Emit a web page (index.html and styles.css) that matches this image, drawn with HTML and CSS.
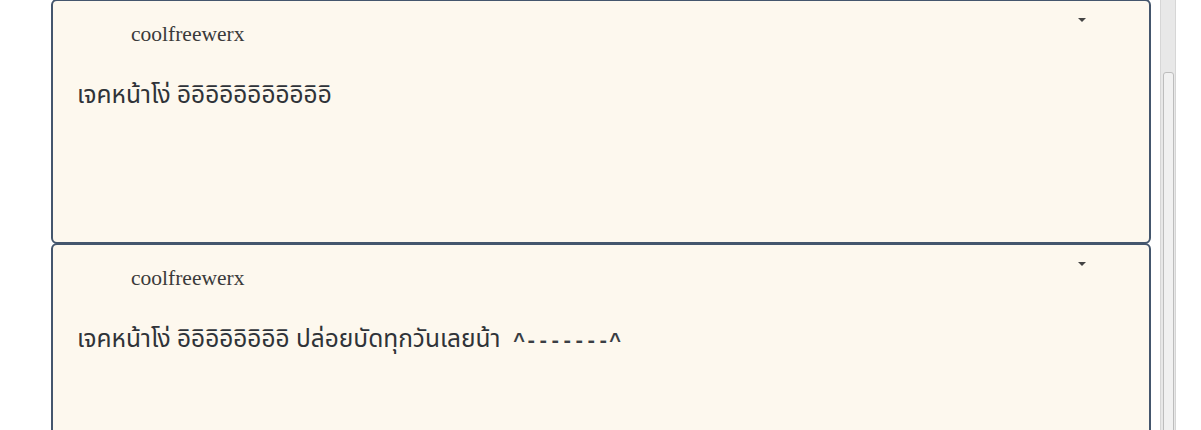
FILE: index.html
```html
<!DOCTYPE html>
<html lang="th">
<head>
<meta charset="utf-8">
<title>Posts</title>
<link rel="stylesheet" href="styles.css">
</head>
<body>
<div class="page">
  <div class="feed">
    <div class="card">
      <div class="card-head">
        <span class="user">coolfreewerx</span>
        <span class="caret"></span>
      </div>
      <p class="msg">เจคหน้าโง่ อิอิอิอิอิอิอิอิอิอิอิ</p>
    </div>
    <div class="card">
      <div class="card-head">
        <span class="user">coolfreewerx</span>
        <span class="caret"></span>
      </div>
      <p class="msg">เจคหน้าโง่ อิอิอิอิอิอิอิอิ ปล่อยบัดทุกวันเลยน้า &nbsp;<span class="emote">^-------^</span></p>
    </div>
  </div>
  <div class="scrollbar">
    <div class="thumb"></div>
  </div>
</div>
</body>
</html>
```

FILE: styles.css
```css
html, body {
  margin: 0;
  padding: 0;
  background: #ffffff;
  height: 430px;
  overflow: hidden;
}
.page {
  display: flex;
  align-items: stretch;
  height: 430px;
}
.feed {
  margin-left: 51px;
  width: 1100px;
  margin-top: -1px;
}
.card {
  box-sizing: border-box;
  height: 245px;
  margin-bottom: -1px;
  background: #fdf8ee;
  border: 2px solid #44566d;
  border-radius: 6px;
  padding: 19px 63px 0 24px;
}
.card-head {
  display: flex;
  align-items: flex-start;
  justify-content: space-between;
}
.user {
  padding-left: 54px;
  font-family: "Liberation Serif", serif;
  font-size: 21.5px;
  color: #3a3a3a;
  line-height: 28px;
}
.caret {
  margin-top: -2px;
  width: 0;
  height: 0;
  border-left: 4px solid transparent;
  border-right: 4px solid transparent;
  border-top: 4px solid #444444;
}
.msg {
  margin: 30px 0 0 0;
  font-family: "Noto Sans", "Noto Sans Thai", sans-serif;
  font-size: 24.5px;
  line-height: 32px;
  color: #2f3338;
}
.emote {
  font-family: "Liberation Mono", monospace;
  font-size: 20px;
  font-weight: bold;
  color: #3a3e44;
}
.scrollbar {
  margin-left: 9px;
  width: 16px;
  box-sizing: border-box;
  background: #e8e8e8;
  border-left: 1px solid #d6d6d6;
  border-right: 1px solid #d6d6d6;
  padding: 72px 1px 0 2px;
}
.thumb {
  height: 400px;
  background: #f1f1f1;
  border: 1px solid #bdbdbd;
  border-radius: 3px 3px 0 0;
}
```
